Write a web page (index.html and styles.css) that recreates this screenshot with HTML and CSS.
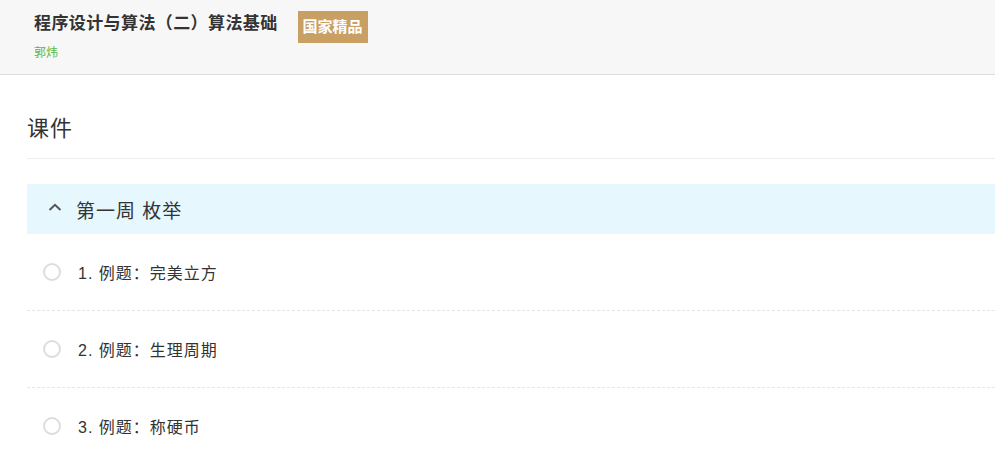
FILE: index.html
```html
<!DOCTYPE html>
<html lang="zh-CN">
<head>
    <meta charset="UTF-8">
    <meta name="viewport" content="width=device-width, initial-scale=1.0">
    <title>程序设计与算法（二）算法基础</title>
    <link rel="stylesheet" href="styles.css">
</head>
<body>
    <div class="course-header">
        <div class="title-row">
            <h1>程序设计与算法（二）算法基础</h1>
            <span class="badge">国家精品</span>
        </div>
        <div class="author">郭炜</div>
    </div>

    <div class="content">
        <h2 class="section-title">课件</h2>

        <div class="week">
            <svg class="chevron" width="14" height="8" viewBox="0 0 14 8">
                <path d="M1.5 7 L7 1.8 L12.5 7" fill="none" stroke="#555" stroke-width="2"/>
            </svg>
            <span>第一周 枚举</span>
        </div>

        <ul class="lessons">
            <li class="lesson"><span class="dot"></span>1. 例题：完美立方</li>
            <li class="lesson"><span class="dot"></span>2. 例题：生理周期</li>
            <li class="lesson"><span class="dot"></span>3. 例题：称硬币</li>
        </ul>
    </div>
</body>
</html>
```

FILE: styles.css
```css
body {
    font-family: "Liberation Sans", "Noto Sans CJK SC", sans-serif;
    margin: 0;
    padding: 0;
    background: #fff;
    color: #333;
    overflow: hidden;
}
.course-header {
    height: 75px;
    background-color: #f7f7f7;
    border-bottom: 1px solid #ddd;
    padding-left: 34px;
    box-sizing: border-box;
}
.title-row {
    display: flex;
    align-items: center;
    padding-top: 11px;
    height: 32px;
}
.title-row h1 {
    margin: 0;
    font-size: 17px;
    letter-spacing: 0.4px;
    font-weight: bold;
    color: #333;
    line-height: 24px;
    position: relative;
    top: -3px;
}
.badge {
    margin-left: 20px;
    height: 32px;
    line-height: 32px;
    padding: 0 5px;
    background-color: #c9a063;
    color: #fff;
    font-size: 15px;
    font-weight: bold;
}
.author {
    font-size: 12px;
    color: #5cb83c;
    line-height: 16px;
    margin-top: 2px;
}
.content {
    padding-left: 27px;
}
.section-title {
    margin: 34px 0 0;
    font-size: 22px;
    letter-spacing: 1px;
    font-weight: normal;
    line-height: 40px;
    padding-bottom: 9px;
    border-bottom: 1px solid #eee;
    color: #333;
}
.week {
    margin-top: 25px;
    height: 50px;
    background-color: #e6f7fe;
    display: flex;
    align-items: center;
    font-size: 19px;
    letter-spacing: 1px;
    color: #333;
}
.chevron {
    margin-left: 21px;
    margin-right: 14px;
    position: relative;
    top: -2px;
}
.lessons {
    list-style: none;
    margin: 0;
    padding: 0;
}
.lesson {
    height: 76px;
    display: flex;
    align-items: center;
    font-size: 16px;
    letter-spacing: 1px;
    color: #333;
    border-bottom: 1px dashed #e6e6e6;
}
.dot {
    width: 14px;
    height: 14px;
    border: 2px solid #ddd;
    border-radius: 50%;
    margin-left: 16px;
    margin-right: 17px;
}
```
